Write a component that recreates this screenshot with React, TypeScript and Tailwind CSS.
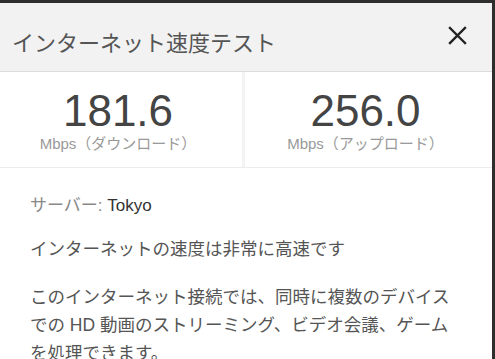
import React from "react";

const FONT = { fontFamily: '"Liberation Sans", "Noto Sans CJK JP", sans-serif' };

export default function App() {
  return (
    <div className="w-[495px] h-[359px] overflow-hidden bg-[#2e2e2e] pt-[3px] pr-[3px]" style={FONT}>
      <div className="h-full w-full bg-white flex flex-col">
        <div className="h-[69px] shrink-0 bg-[#f2f2f2] border-b border-[#dcdcdc] flex items-center justify-between pl-[12px] pr-[25px]">
          <div className="text-[22px] leading-[28px] text-[#555] mt-[14px]">インターネット速度テスト</div>
          <svg width="19" height="19" viewBox="0 0 19 19" className="mb-[3px]">
            <path d="M2 2 L17 17 M17 2 L2 17" stroke="#222" strokeWidth="2.4" strokeLinecap="square" />
          </svg>
        </div>
        <div className="h-[96px] shrink-0 flex border-b border-[#ececec]">
          <div className="w-[242px] flex flex-col items-center pt-[17px] pr-[6px]">
            <div className="text-[44px] leading-[44px] text-[#444]">181.6</div>
            <div className="text-[15px] leading-[16px] text-[#999] mt-[3px]">Mbps（ダウンロード）</div>
          </div>
          <div className="w-[3px] bg-[#f3f3f3]" />
          <div className="flex-1 flex flex-col items-center pt-[17px] pr-[6px]">
            <div className="text-[44px] leading-[44px] text-[#444]">256.0</div>
            <div className="text-[15px] leading-[16px] text-[#999] mt-[3px]">Mbps（アップロード）</div>
          </div>
        </div>
        <div className="flex flex-col pl-[30px] pr-[30px] pt-[28px]">
          <div className="text-[17px] leading-[20px] text-[#888]">
            サーバー: <span className="text-[#333]">Tokyo</span>
          </div>
          <div className="text-[17.5px] leading-[24px] text-[#555] mt-[21px]">インターネットの速度は非常に高速です</div>
          <div className="text-[17.5px] leading-[28px] text-[#555] mt-[22px]">
            <div>このインターネット接続では、同時に複数のデバイス</div>
            <div>での HD 動画のストリーミング、ビデオ会議、ゲーム</div>
            <div>を処理できます。</div>
          </div>
        </div>
      </div>
    </div>
  );
}
